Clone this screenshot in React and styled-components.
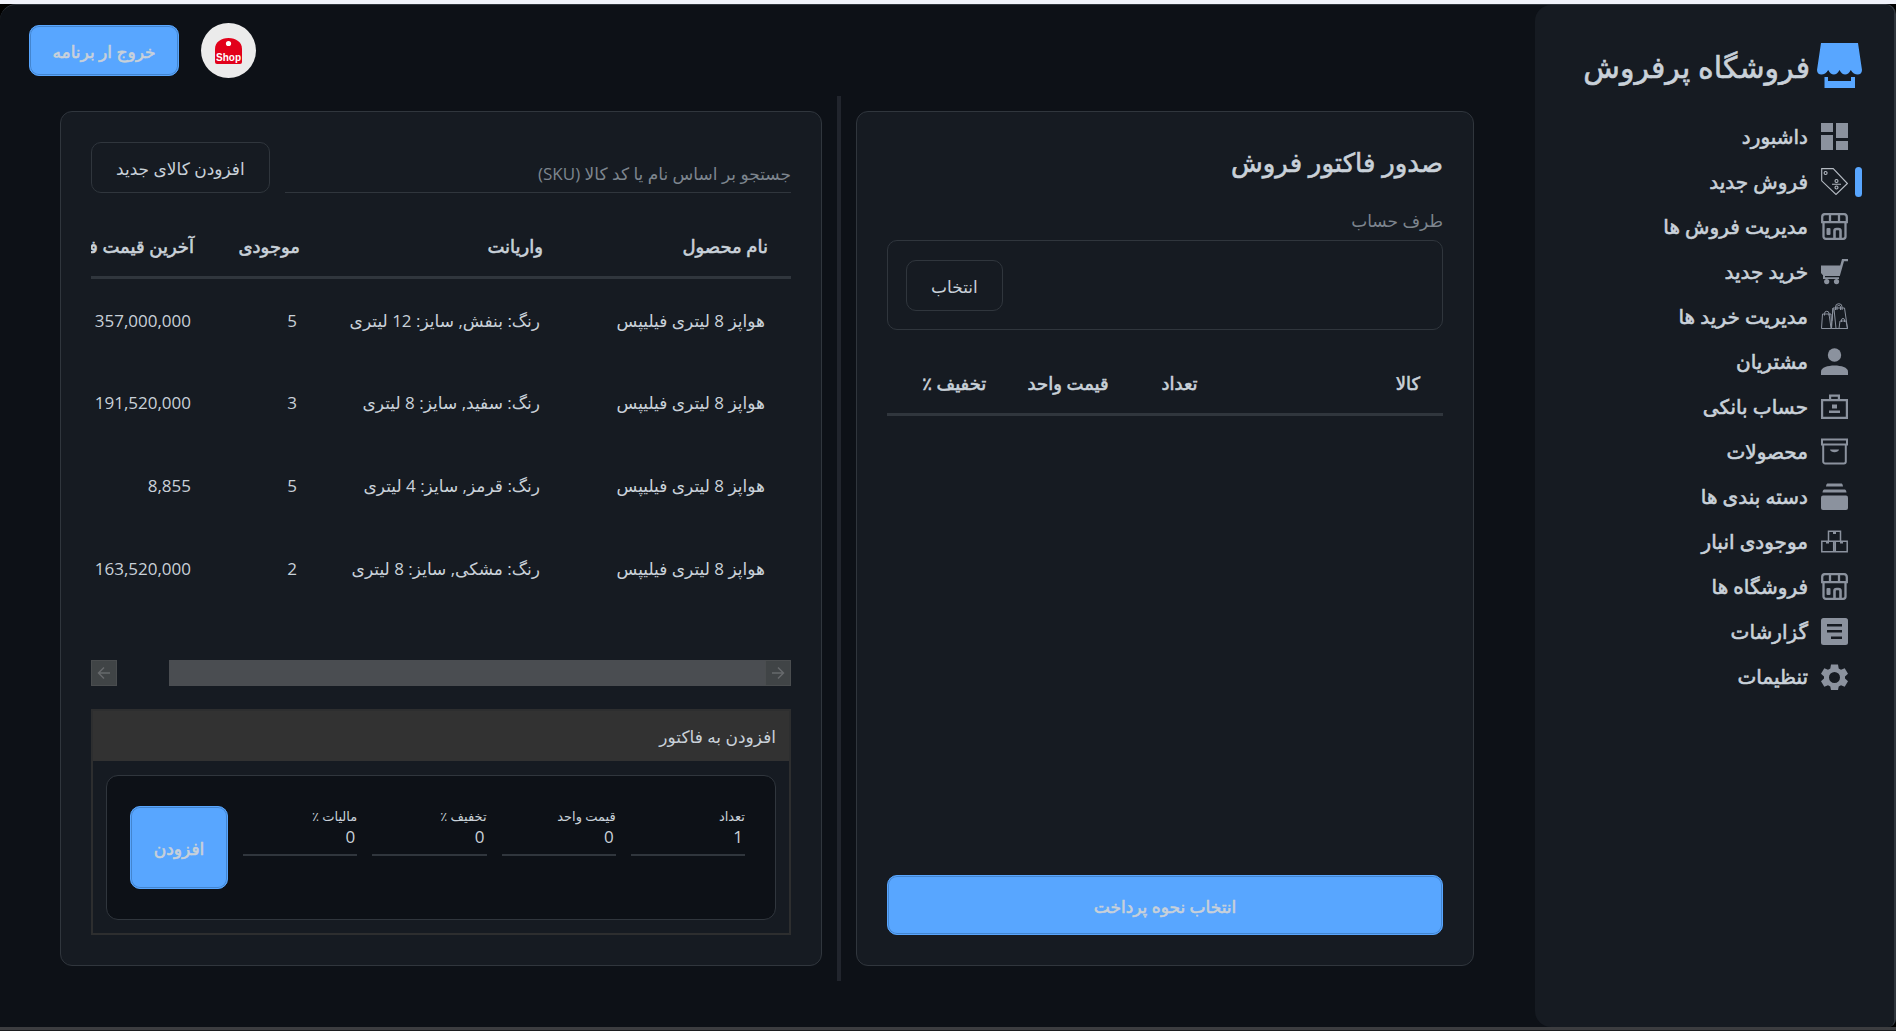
import React from "react";
import styled, { createGlobalStyle, css } from "styled-components";

const c = {
  bg: "#0d1117",
  panel: "#161b22",
  line: "#30363d",
  text: "#c9d1d9",
  muted: "#7d858e",
  accent: "#58a6ff",
  accentDark: "#4385cf",
  icon: "#8b929e",
};

const semibold = css`
  font-weight: 400;
  -webkit-text-stroke: 0.6px currentColor;
`;

const GlobalStyle = createGlobalStyle`
  * { box-sizing: border-box; }
  body { margin: 0; background: #000; }
  body, button, input {
    font-family: "Open Sans", "DejaVu Sans", sans-serif;
    color: ${c.text};
  }
`;

const Page = styled.div`
  min-height: 100vh;
  display: flex;
  flex-direction: column;
  direction: rtl;
`;
const TopStrip = styled.div`
  height: 4px;
  background: #f0f2fa;
`;
const BottomStrip = styled.div`
  height: 4px;
  background: #3c3d40;
  border-bottom: 1px solid #1c1d1f;
`;
const Shell = styled.div`
  flex: 1;
  display: flex;
  background: ${c.bg};
  border-top: 1px solid ${c.line};
  border-right: 2px solid ${c.line};
  border-radius: 16px 10px 8px 0;
  overflow: hidden;
`;

const Sidebar = styled.aside`
  width: 359px;
  flex: none;
  background: ${c.panel};
  border-radius: 16px 0 0 16px;
  padding: 38px 32px 0;
`;
const Brand = styled.div`
  display: flex;
  gap: 7px;
  height: 45px;
  svg { flex: none; }
`;
const BrandName = styled.h1`
  margin: 0;
  font-size: 30px;
  line-height: 48px;
  white-space: nowrap;
  ${semibold}
`;
const Menu = styled.nav`
  display: flex;
  flex-direction: column;
  margin-top: 26px;
`;
const MenuLink = styled.a`
  display: flex;
  align-items: center;
  height: 45px;
  gap: 13px;
  color: ${c.text};
  text-decoration: none;
  font-size: 20px;
  white-space: nowrap;
  ${semibold}
  &::before {
    content: "";
    width: 7px;
    height: 30px;
    border-radius: 4px;
    margin-left: -6px;
    background: ${(p) => (p.$active ? c.accent : "transparent")};
  }
  svg { flex: none; color: ${c.icon}; }
`;

const Main = styled.main`
  flex: 1;
  min-width: 0;
  display: flex;
  flex-direction: column;
`;
const Header = styled.header`
  height: 91px;
  flex: none;
  display: flex;
  justify-content: flex-end;
  align-items: center;
  gap: 22px;
  padding: 0 0 0 29px;
`;
const Avatar = styled.div`
  width: 55px;
  height: 55px;
  border-radius: 50%;
  background: #ebebeb;
  display: grid;
  place-items: center;
`;

const Button = styled.button`
  border: 1px solid ${c.line};
  border-radius: 10px;
  background: transparent;
  font-size: 17px;
  line-height: 27px;
  height: 51px;
  padding: 2px 24px 0;
  white-space: nowrap;
  flex: none;
`;
const PrimaryButton = styled(Button)`
  background: ${c.accent};
  border-color: ${c.accent};
  box-shadow: inset 0 0 0 1px ${c.accentDark};
  padding: 2px 8px 0;
  ${semibold}
  height: ${(p) => p.$height || 51}px;
  width: ${(p) => p.$width || "auto"};
`;

const Workspace = styled.div`
  flex: 1;
  display: grid;
  grid-template-columns: minmax(0, 618fr) 4px minmax(0, 762fr);
  gap: 15px;
  padding: 0 61px 46px 60px;
`;
const Splitter = styled.div`
  background: #21252d;
`;
const Card = styled.section`
  margin: 15px 0;
  background: ${c.panel};
  border: 1px solid ${c.line};
  border-radius: 12px;
  padding: 30px;
  display: flex;
  flex-direction: column;
  min-width: 0;
`;
const Title = styled.h2`
  margin: 0;
  font-size: 26px;
  line-height: 40px;
  ${semibold}
`;
const SectionLabel = styled.div`
  color: ${c.muted};
  font-size: 17px;
  line-height: 26px;
  margin: 26px 0 6px;
`;
const PartyBox = styled.div`
  height: 90px;
  border: 1px solid ${c.line};
  border-radius: 10px;
  display: flex;
  justify-content: flex-end;
  align-items: center;
  padding: 0 18px;
  margin-bottom: 22px;
`;
const Spacer = styled.div`
  flex: 1;
`;

const Table = styled.table`
  border-collapse: collapse;
  table-layout: fixed;
  width: ${(p) => p.$width || "100%"};
  th {
    height: 62px;
    padding: 2px 23px 0 0;
    text-align: right;
    font-size: 18px;
    white-space: nowrap;
    border-bottom: 3px solid ${c.line};
    ${semibold}
  }
  td {
    height: 83px;
    padding: 2px 26px 0 0;
    text-align: right;
    font-size: 17px;
    white-space: nowrap;
  }
`;
const Col = styled.col`
  width: ${(p) => p.$w};
`;
const TableView = styled.div`
  flex: 1;
  overflow: hidden;
`;

const Toolbar = styled.div`
  display: flex;
  gap: 15px;
  height: 51px;
  margin-bottom: 22px;
`;
const SearchInput = styled.input`
  flex: 1;
  min-width: 0;
  border: 0;
  border-bottom: 1px solid ${c.line};
  background: transparent;
  padding: 13px 0 0;
  font-size: 17px;
  outline: none;
  &::placeholder { color: ${c.muted}; opacity: 1; }
`;

const ScrollBar = styled.div`
  display: flex;
  height: 26px;
  margin-bottom: 23px;
`;
const ScrollButton = styled.button`
  width: 26px;
  height: 26px;
  padding: 0;
  border: 1px solid #4a4d4f;
  background: #404446;
  color: #66696c;
  display: grid;
  place-items: center;
`;
const ScrollTrack = styled.div`
  flex: 1;
`;
const ScrollThumb = styled.div`
  width: 92%;
  height: 100%;
  background: #4a4d51;
`;

const Group = styled.div`
  border: 2px solid #2d2e2f;
`;
const GroupHeader = styled.div`
  background: #323232;
  height: 50px;
  line-height: 52px;
  font-size: 17px;
  padding: 0 13px;
`;
const GroupBody = styled.div`
  padding: 14px 13px 13px;
`;
const LineForm = styled.form`
  height: 145px;
  background: ${c.bg};
  border: 1px solid ${c.line};
  border-radius: 12px;
  padding: 30px 30px 0 23px;
  display: flex;
  align-items: flex-start;
  gap: 15px;
`;
const Field = styled.label`
  flex: 1;
  min-width: 0;
  display: flex;
  flex-direction: column;
  font-size: 13px;
  line-height: 20px;
  white-space: nowrap;
`;
const FieldInput = styled.input`
  width: 100%;
  height: 30px;
  border: 0;
  border-bottom: 2px solid ${c.line};
  background: transparent;
  padding: 0 2px 8px;
  font-size: 17px;
  outline: none;
`;

const Svg = ({ children, size = 27 }) => (
  <svg width={size} height={size} viewBox="0 0 27 27" fill="none" aria-hidden="true">
    {children}
  </svg>
);
const Store = () => (
  <Svg>
    <g stroke="currentColor" strokeWidth="2.300">
      <path d="M4 1.200h19a3 3 0 0 1 2.800 3v5H1.200V4a3 3 0 0 1 2.800-3ZM9 1v8M18 1v8" />
      <path d="M2.500 10v13.500a2.300 2.300 0 0 0 2.300 2.300h17.400a2.300 2.300 0 0 0 2.300-2.300V10" />
      <path d="M13.500 26v-8a2 2 0 0 1 2-2h2a2 2 0 0 1 2 2v8" strokeWidth="2.600" />
    </g>
    <rect x="5.500" y="15" width="4" height="7" rx="1" fill="currentColor" />
  </Svg>
);
const icons = {
  dashboard: (
    <Svg>
      <path fill="currentColor" d="M0 0h12v9H0zM15 0h12v15H15zM0 12h12v15H0zM15 18h12v9H15z" />
    </Svg>
  ),
  tag: (
    <Svg>
      <g stroke="#b4bac2" strokeWidth="1.100">
        <path d="M.7.600h11.500l14.200 14.900-11.400 11L.700 12.800Z" />
        <circle cx="4.600" cy="5" r="1.500" />
        <path d="M11 16.200h9" />
        <circle cx="15.500" cy="13" r="1.500" />
        <circle cx="15.500" cy="19.500" r="1.500" />
      </g>
    </Svg>
  ),
  store: <Store />,
  cart: (
    <Svg>
      <path fill="currentColor" d="M0 7.500h19.200L21 1h6v2.200h-4L18.800 18H4v1.200h14V21H2v-4h-.300L0 15z" />
      <circle cx="5.700" cy="23.600" r="2.600" fill="currentColor" />
      <circle cx="15.500" cy="23.600" r="2.600" fill="currentColor" />
    </Svg>
  ),
  bags: (
    <Svg>
      <g stroke="currentColor" strokeWidth="1">
        <path d="M12 5h11.500l3 20.500H10.500ZM12 5l-1 13M13 6l2 19.500" />
        <path d="M14.500 7V4a3.300 3.300 0 0 1 6.600 0v3M16 7V3.500a2 2 0 0 1 3.500 0V7" />
        <path d="M1.500 11H10l.500 14.500H.500ZM8 11l2 14" />
        <path d="M3.500 12.500v-2a2.200 2.200 0 0 1 4.500 0v2" />
        <path d="M19 18h6l1.500 7.500h-8.500ZM20.500 19v-2a1.500 1.500 0 0 1 3 0v2" />
      </g>
    </Svg>
  ),
  user: (
    <Svg>
      <circle cx="13.500" cy="7" r="6.700" fill="currentColor" />
      <path fill="currentColor" d="M0 27v-3.500c0-8 27-8 27 0V27z" />
    </Svg>
  ),
  bank: (
    <Svg>
      <path stroke="currentColor" strokeWidth="2.200" d="M1.100 7.100h24.800v17.800H1.100zM9.100 7V2.600h8.800V7" />
      <path fill="currentColor" d="M11 11.500h5v4h-5zM8 17.500h11v2.500H8z" />
    </Svg>
  ),
  archive: (
    <Svg>
      <path stroke="currentColor" strokeWidth="2" d="M1 1.500h25v5H1zM2.200 7v16.500a2 2 0 0 0 2 2h18.600a2 2 0 0 0 2-2V7" />
      <path fill="currentColor" d="M9 11.500h9c-.500 3.500-8.500 3.500-9 0z" />
    </Svg>
  ),
  stack: (
    <Svg>
      <path fill="currentColor" d="M5 3.500C5.300 1 6 .500 7 .500h13c1 0 1.700.500 2 3zM1.500 9.500C1.800 7 2.500 6.500 4 6.500h19c1.500 0 2.200.500 2.500 3z" />
      <rect y="12.500" width="27" height="14.500" rx="2" fill="currentColor" />
    </Svg>
  ),
  boxes: (
    <Svg>
      <path
        stroke="currentColor"
        strokeWidth="1.500"
        d="M7.500 12.500V3.200h12v9.300M.800 13.200h25.400v10.600H.800zM12.700 13v11M14.300 13v11"
      />
      <path fill="currentColor" d="M12 3h3v3h-3zM5 13h3v2.500H5zM19 13h3v2.500h-3z" />
    </Svg>
  ),
  report: (
    <Svg>
      <rect width="27" height="27" rx="2.500" fill="currentColor" />
      <path fill={c.panel} d="M6 6h15v2.500H6zM6 12h15v2.500H6zM10 18.500h11V21H10z" />
    </Svg>
  ),
  gear: (
    <Svg>
      <path
        fill="currentColor"
        fillRule="evenodd"
        d="M10 1.500h7l.700 4 2.300 1.300 3.700-1.600 3.300 5.600-3 2.700v2l3 2.700-3.300 5.600-3.700-1.600-2.300 1.300-.700 3.500h-7l-.700-3.500L7 22.200l-3.700 1.600L0 18.200l3-2.700v-2l-3-2.700 3.300-5.600L7 6.800l2.300-1.300zM13.500 9a5.500 5.500 0 1 0 0 11 5.500 5.500 0 0 0 0-11z"
      />
    </Svg>
  ),
};

const BrandIcon = () => (
  <svg width="45" height="45" viewBox="0 0 45 45" fill={c.accent} aria-hidden="true">
    <path d="M4 0h37l4 27c0 6-8 6-11.200 0-3 6-8.300 6-11.300 0-3 6-8.300 6-11.300 0C8 33 0 33 0 27z" />
    <path d="M7.500 34H11v4h23v-4h4v11H7.500z" />
  </svg>
);
const ShopLogo = () => (
  <svg width="27" height="26" viewBox="0 0 27 26" aria-hidden="true">
    <path d="M0 11C0 4 6 0 13.500 0S27 4 27 11v13a2 2 0 0 1-2 2H2a2 2 0 0 1-2-2z" fill="#e2001a" />
    <circle cx="13.500" cy="5.500" r="2.600" fill="#fff" />
    <text
      x="13.500"
      y="22.500"
      textAnchor="middle"
      direction="ltr"
      fontFamily="Liberation Sans, sans-serif"
      fontWeight="700"
      fontSize="10"
      fill="#fff"
    >
      Shop
    </text>
  </svg>
);
const Arrow = ({ flip }) => (
  <svg width="14" height="14" viewBox="0 0 14 14" fill="none" stroke="currentColor" strokeWidth="1.500" aria-hidden="true">
    <path d={flip ? "M13 7H2M7 1.500 1.500 7 7 12.500" : "M1 7h11M7 1.500 12.500 7 7 12.500"} />
  </svg>
);

const menu = [
  ["داشبورد", "dashboard"],
  ["فروش جدید", "tag"],
  ["مدیریت فروش ها", "store"],
  ["خرید جدید", "cart"],
  ["مدیریت خرید ها", "bags"],
  ["مشتریان", "user"],
  ["حساب بانکی", "bank"],
  ["محصولات", "archive"],
  ["دسته بندی ها", "stack"],
  ["موجودی انبار", "boxes"],
  ["فروشگاه ها", "store"],
  ["گزارشات", "report"],
  ["تنظیمات", "gear"],
];
const products = [
  ["هواپز 8 لیتری فیلیپس", "رنگ: بنفش, سایز: 12 لیتری", "5", "357,000,000"],
  ["هواپز 8 لیتری فیلیپس", "رنگ: سفید, سایز: 8 لیتری", "3", "191,520,000"],
  ["هواپز 8 لیتری فیلیپس", "رنگ: قرمز, سایز: 4 لیتری", "5", "8,855"],
  ["هواپز 8 لیتری فیلیپس", "رنگ: مشکی, سایز: 8 لیتری", "2", "163,520,000"],
];
const fields = [
  ["qty", "تعداد", "1"],
  ["price", "قیمت واحد", "0"],
  ["discount", "تخفیف ٪", "0"],
  ["tax", "مالیات ٪", "0"],
];

export default function App() {
  return (
    <Page lang="fa">
      <GlobalStyle />
      <TopStrip />
      <Shell>
        <Sidebar>
          <Brand>
            <BrandIcon />
            <BrandName>فروشگاه پرفروش</BrandName>
          </Brand>
          <Menu>
            {menu.map(([label, icon]) => (
              <MenuLink key={label} href="#" $active={icon === "tag"}>
                {icons[icon]}
                {label}
              </MenuLink>
            ))}
          </Menu>
        </Sidebar>
        <Main>
          <Header>
            <Avatar>
              <ShopLogo />
            </Avatar>
            <PrimaryButton type="button" $width="150px">خروج ار برنامه</PrimaryButton>
          </Header>
          <Workspace>
            <Card>
              <Title>صدور فاکتور فروش</Title>
              <SectionLabel>طرف حساب</SectionLabel>
              <PartyBox>
                <Button type="button">انتخاب</Button>
              </PartyBox>
              <Table>
                <colgroup>
                  <Col $w="40%" />
                  <Col $w="16%" />
                  <Col $w="22%" />
                  <Col $w="22%" />
                </colgroup>
                <thead>
                  <tr>
                    <th>کالا</th>
                    <th>تعداد</th>
                    <th>قیمت واحد</th>
                    <th>تخفیف ٪</th>
                  </tr>
                </thead>
              </Table>
              <Spacer />
              <PrimaryButton type="button" $height={60} $width="100%">
                انتخاب نحوه پرداخت
              </PrimaryButton>
            </Card>
            <Splitter />
            <Card>
              <Toolbar>
                <SearchInput
                  type="text"
                  aria-label="جستجو"
                  placeholder="جستجو بر اساس نام یا کد کالا (SKU)"
                />
                <Button type="button">افزودن کالای جدید</Button>
              </Toolbar>
              <TableView>
                <Table $width="759px">
                  <colgroup>
                    <Col $w="225px" />
                    <Col $w="243px" />
                    <Col $w="106px" />
                    <Col $w="185px" />
                  </colgroup>
                  <thead>
                    <tr>
                      <th>نام محصول</th>
                      <th>واریانت</th>
                      <th>موجودی</th>
                      <th>آخرین قیمت فروش</th>
                    </tr>
                  </thead>
                  <tbody>
                    {products.map((row) => (
                      <tr key={row[1]}>
                        {row.map((cell, i) => (
                          <td key={i}>{cell}</td>
                        ))}
                      </tr>
                    ))}
                  </tbody>
                </Table>
              </TableView>
              <ScrollBar>
                <ScrollButton type="button" aria-label="راست">
                  <Arrow />
                </ScrollButton>
                <ScrollTrack>
                  <ScrollThumb />
                </ScrollTrack>
                <ScrollButton type="button" aria-label="چپ">
                  <Arrow flip />
                </ScrollButton>
              </ScrollBar>
              <Group>
                <GroupHeader>افزودن به فاکتور</GroupHeader>
                <GroupBody>
                  <LineForm>
                    {fields.map(([id, label, value]) => (
                      <Field key={id} htmlFor={id}>
                        {label}
                        <FieldInput id={id} type="text" defaultValue={value} />
                      </Field>
                    ))}
                    <PrimaryButton type="button" $height={83} $width="98px">
                      افزودن
                    </PrimaryButton>
                  </LineForm>
                </GroupBody>
              </Group>
            </Card>
          </Workspace>
        </Main>
      </Shell>
      <BottomStrip />
    </Page>
  );
}
